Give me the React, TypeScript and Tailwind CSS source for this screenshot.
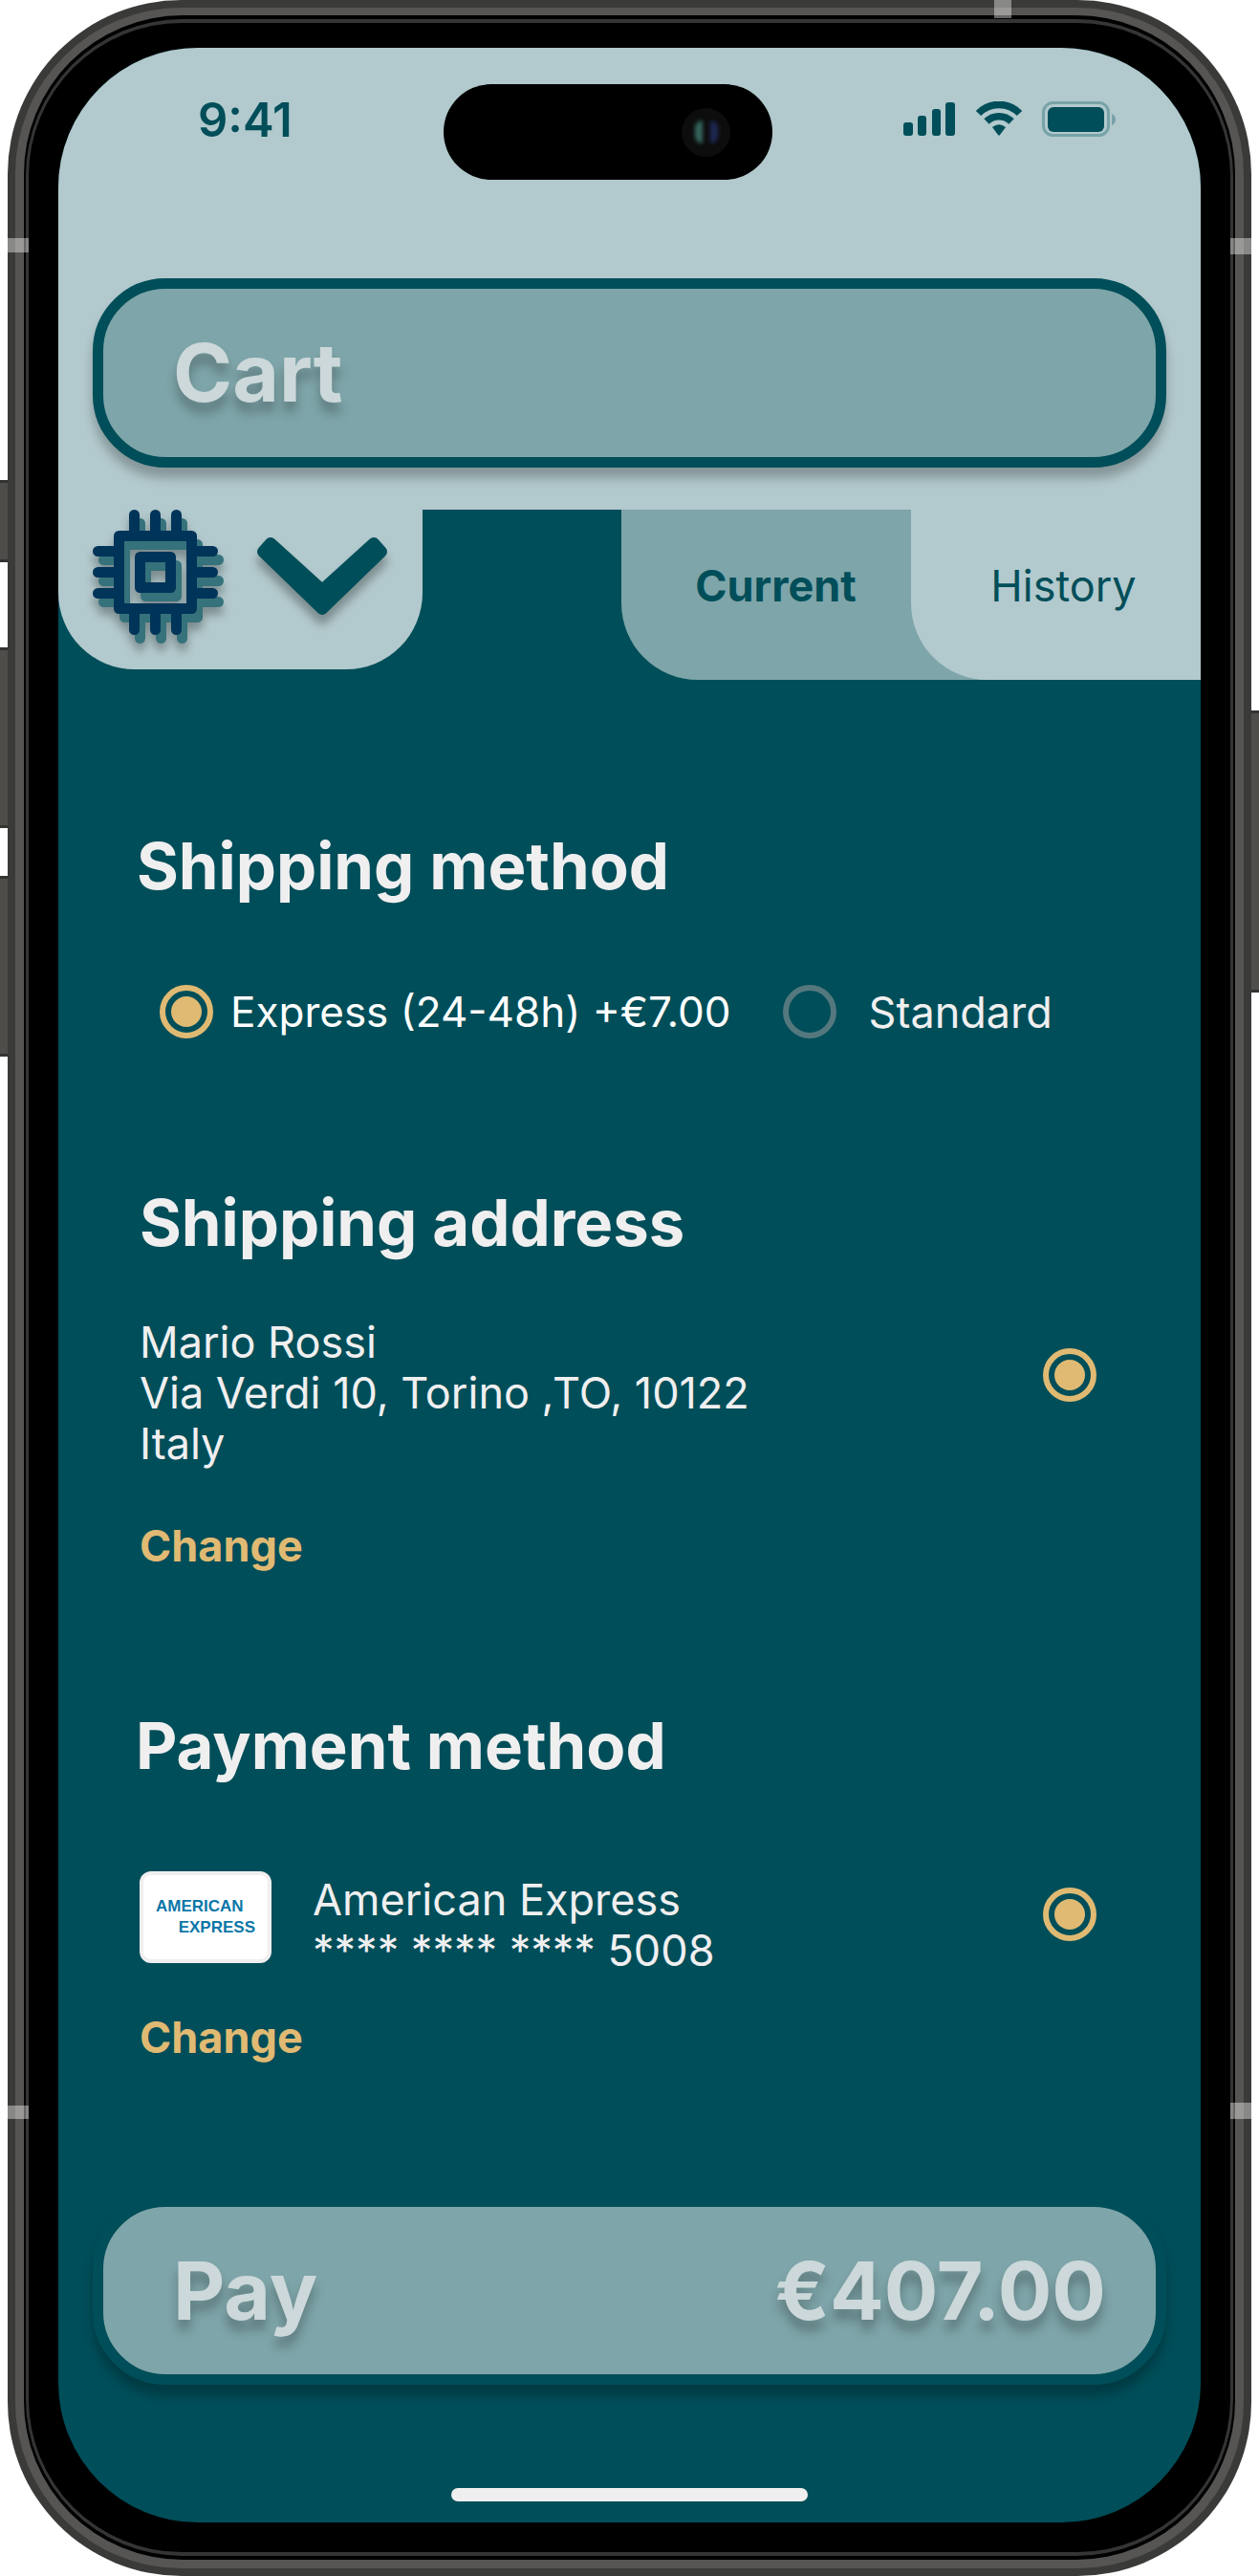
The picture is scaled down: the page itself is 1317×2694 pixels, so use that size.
import { useState } from "react";

const CHIP_PINS = [38, 60, 82];

function ChipShape({ x = 0, y = 0, color }: { x?: number; y?: number; color: string }) {
  return (
    <g transform={`translate(${x} ${y})`}>
      {CHIP_PINS.map((p) => (
        <g key={p} fill={color}>
          <rect x={p} y="0" width="11" height="30" rx="5.5" />
          <rect x={p} y="101" width="11" height="30" rx="5.5" />
          <rect x="0" y={p} width="30" height="11" rx="5.5" />
          <rect x="101" y={p} width="30" height="11" rx="5.5" />
        </g>
      ))}
      <g fill="none" stroke={color} strokeWidth="11" strokeLinejoin="round">
        <rect x="27.5" y="27.5" width="76" height="76" />
        <rect x="49.5" y="49.5" width="32" height="32" />
      </g>
    </g>
  );
}

function ChipIcon() {
  return (
    <svg viewBox="0 0 138 141" className="h-[141px] w-[138px] drop-shadow-[0_8px_5px_rgba(0,0,0,0.3)]" aria-hidden="true">
      <ChipShape x={6} y={9} color="#35727b" />
      <ChipShape color="#003459" />
    </svg>
  );
}

function ChevronIcon() {
  return (
    <svg viewBox="0 0 136 81" className="h-[81px] w-[136px] drop-shadow-[0_10px_5px_rgba(0,0,0,0.3)]" aria-hidden="true">
      <path
        d="M14 6 L6 15 L68 75 L130 15 L122 6 L68 55 Z"
        fill="#004e59"
        stroke="#004e59"
        strokeWidth="12"
        strokeLinejoin="round"
      />
    </svg>
  );
}

function StatusIcons() {
  return (
    <svg viewBox="0 0 222 38" className="h-[38px] w-[222px]" role="img" aria-label="Signal, Wi-Fi and battery">
      <g fill="#004e59">
        <rect x="0" y="22" width="10" height="14" rx="3" />
        <rect x="15" y="15" width="9" height="21" rx="3" />
        <rect x="30" y="8" width="9" height="28" rx="3" />
        <rect x="44" y="1" width="10" height="35" rx="3" />
      </g>
      <g fill="none" stroke="#004e59" strokeWidth="7.5">
        <path d="M78.5 12.5 A30 30 0 0 1 121.5 12.5" />
        <path d="M87 21 A18.5 18.5 0 0 1 113 21" />
      </g>
      <path d="M93 27 Q100 21.5 107 27 L101 35 Q100 36.5 99 35 Z" fill="#004e59" />
      <rect x="146.5" y="1.5" width="68" height="34" rx="10" fill="none" stroke="#77a3a8" strokeWidth="3" />
      <rect x="151" y="6" width="59" height="26" rx="6" fill="#004e59" />
      <path d="M218 13 Q222 15 222 19 Q222 23 218 25 Z" fill="#77a3a8" />
    </svg>
  );
}

function Radio({ name, label, checked, onChange }: { name: string; label?: string; checked: boolean; onChange: () => void }) {
  return (
    <input
      type="radio"
      name={name}
      aria-label={label}
      checked={checked}
      onChange={onChange}
      className="m-0 size-14 shrink-0 appearance-none rounded-full border-[6px] border-[#55787f] bg-clip-content p-[6px] checked:border-[#e0ba73] checked:bg-[#e0ba73]"
    />
  );
}

function Heading({ children }: { children: string }) {
  return <h2 className="text-[67px] leading-[80px] font-bold">{children}</h2>;
}

function ChangeButton() {
  return <button type="button" className="block font-bold text-[#e0ba73]">Change</button>;
}

const KEY = "absolute w-2 border-y-[3px] border-[#333331] bg-[#4e4d4a]";
const BAND = "absolute bg-white/40";

export default function App() {
  const [method, setMethod] = useState("express");
  const [tab, setTab] = useState("current");
  const keep = () => undefined;

  return (
    <div className="relative w-full bg-white px-2 font-['Inter',sans-serif] text-[45px] leading-[53px] text-[#f0eff0]">
      {/* Hardware keys */}
      <div className={`${KEY} top-[502px] left-0 h-[86px]`} />
      <div className={`${KEY} top-[677px] left-0 h-[189px]`} />
      <div className={`${KEY} top-[916px] left-0 h-[189px]`} />
      <div className={`${KEY} top-[743px] right-0 h-[295px]`} />

      {/* Casing layers */}
      <div className="relative rounded-[182px] bg-[#3a3a38] p-2">
        <div className="rounded-[174px] bg-[#575553] px-[9px] pt-2 pb-[9px]">
          <div className="rounded-[166px] bg-black px-[2px] py-1">
            <div className="rounded-[164px] bg-[#353535] px-[3px] py-1">
              <div className="rounded-[160px] bg-black px-[31px] pt-[26px] pb-[31px]">
                <main className="overflow-hidden rounded-[146px] bg-[#004e59]">
                  <header className="bg-[#b2c9cd] px-9 pt-[38px] pb-11">
                    <div className="-mx-9 grid grid-cols-[403fr_344px_448fr]">
                      <time className="self-center pb-6 pl-[146px] text-[49px] leading-[48px] font-semibold text-[#004e59]">9:41</time>
                      <div className="flex h-[100px] items-center justify-end rounded-full bg-black pr-11">
                        <div className="flex size-[51px] items-center justify-center gap-2 rounded-full bg-[#0d0d0d]">
                          <div className="h-6 w-2 rounded-l-full bg-[#3f7d72]/80 blur-[2px]" />
                          <div className="h-6 w-2 rounded-r-full bg-[#232f66]/80 blur-[2px]" />
                        </div>
                      </div>
                      <div className="flex justify-end pt-[18px] pr-[89px]">
                        <StatusIcons />
                      </div>
                    </div>
                    <h1 className="mt-[103px] flex h-[198px] items-center rounded-[76px] border-[11px] border-[#004e59] bg-[#7ea5a9] px-[73px] text-[84px] leading-[102px] font-bold text-[#ccd8da] shadow-[0_11px_11px_rgba(0,0,0,0.25)] [text-shadow:0_11px_11px_rgba(0,0,0,0.25)]">
                      Cart
                    </h1>
                  </header>

                  <nav className="flex items-start justify-between">
                    <button type="button" aria-label="Choose category" className="flex h-[167px] w-[381px] items-start gap-[34px] rounded-b-[80px] bg-[#b2c9cd] pl-9">
                      <ChipIcon />
                      <span className="pt-[29px]"><ChevronIcon /></span>
                    </button>
                    <div role="tablist" className="grid h-[178px] w-[606px] grid-cols-2 rounded-bl-[80px] bg-[#7ea5a9] text-[#004e59]">
                      <button type="button" role="tab" aria-selected={tab === "current"} onClick={() => setTab("current")} className="pb-5 pl-5 font-bold">
                        Current
                      </button>
                      <button type="button" role="tab" aria-selected={tab === "history"} onClick={() => setTab("history")} className="rounded-bl-[80px] bg-[#b2c9cd] pb-5 pl-4">
                        History
                      </button>
                    </div>
                  </nav>

                  <section className="px-[82px] pt-[155px]">
                    <Heading>Shipping method</Heading>
                    <div className="mt-[84px] flex pl-6">
                      <label className="flex items-center gap-[18px] text-[44px] whitespace-nowrap text-white">
                        <Radio name="method" checked={method === "express"} onChange={() => setMethod("express")} />
                        Express (24-48h) +€7.00
                      </label>
                      <label className="ml-[54px] flex items-center gap-[34px]">
                        <Radio name="method" checked={method === "standard"} onChange={() => setMethod("standard")} />
                        Standard
                      </label>
                    </div>
                  </section>

                  <section className="pt-[153px] pr-[109px] pl-[85px]">
                    <Heading>Shipping address</Heading>
                    <div className="mt-[58px] flex items-start justify-between">
                      <address className="not-italic">
                        Mario Rossi
                        <br />
                        Via Verdi 10, Torino ,TO, 10122
                        <br />
                        Italy
                      </address>
                      <div className="flex pt-[33px]">
                        <Radio name="address" label="Mario Rossi, Via Verdi 10" checked onChange={keep} />
                      </div>
                    </div>
                    <div className="mt-[54px]"><ChangeButton /></div>
                  </section>

                  <section className="pt-[143px] pr-[109px] pl-[81px]">
                    <Heading>Payment method</Heading>
                    <div className="mt-[91px] flex items-start pl-1">
                      <div className="flex h-24 w-[138px] flex-col justify-center rounded-xl border-4 border-[#f0eff0] bg-white px-[13px] font-['Liberation_Sans',sans-serif] text-[17px] leading-[22px] font-bold text-[#0b76a8]">
                        <span>AMERICAN</span>
                        <span className="self-end">EXPRESS</span>
                      </div>
                      <p className="ml-[43px] pt-[3px]">
                        American Express
                        <br />
                        **** **** **** 5008
                      </p>
                      <div className="ml-auto flex pt-[17px]">
                        <Radio name="payment" label="American Express ending 5008" checked onChange={keep} />
                      </div>
                    </div>
                    <div className="mt-[38px] pl-1"><ChangeButton /></div>
                  </section>

                  <footer className="px-9 pt-[140px] pb-[22px]">
                    <button type="button" className="flex h-[197px] w-full items-center justify-between rounded-[76px] border-[11px] border-[#004e59] bg-[#7ea5a9] pr-[52px] pl-[73px] text-[84px] leading-[102px] font-bold text-[#ccd8da] shadow-[0_11px_11px_rgba(0,0,0,0.25)] [text-shadow:0_11px_11px_rgba(0,0,0,0.25)]">
                      <span>Pay</span>
                      <span>€407.00</span>
                    </button>
                    <div className="mx-auto mt-[108px] h-[14px] w-[373px] rounded-full bg-[#f0eff0]" />
                  </footer>
                </main>
              </div>
            </div>
          </div>
        </div>

        {/* Antenna bands */}
        <div className={`${BAND} top-0 right-[251px] h-[19px] w-[18px]`} />
        <div className={`${BAND} top-[249px] left-0 h-[15px] w-[22px]`} />
        <div className={`${BAND} top-[249px] right-0 h-[17px] w-[22px]`} />
        <div className={`${BAND} top-[2202px] left-0 h-[14px] w-[22px]`} />
        <div className={`${BAND} top-[2199px] right-0 h-[17px] w-[22px]`} />
      </div>
    </div>
  );
}
